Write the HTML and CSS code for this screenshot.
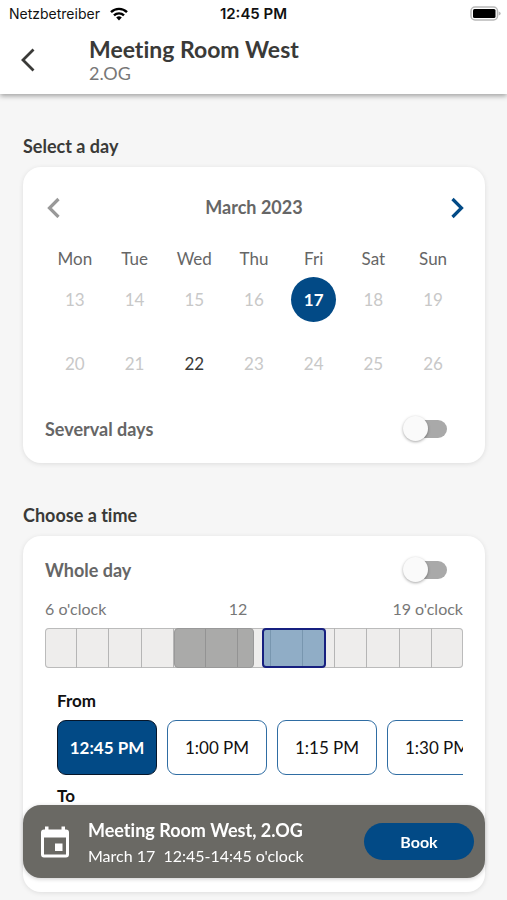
FILE: index.html
```html
<!DOCTYPE html>
<html lang="en">
<head>
<meta charset="utf-8">
<meta name="viewport" content="width=device-width, initial-scale=1">
<title>Meeting Room West</title>
<link rel="stylesheet" href="styles.css">
</head>
<body>
<header class="top">
  <div class="status">
    <span class="carrier">Netzbetreiber
      <svg width="18" height="14" viewBox="0 0 18 14" aria-hidden="true"><g fill="none" stroke="#000" stroke-width="2.4"><path d="M1 5.2a11.4 11.4 0 0 1 16 0"/><path d="M4 8.4a7.2 7.2 0 0 1 10 0"/></g><path d="M6.2 10.6a4 4 0 0 1 5.600 0L9 13.600z"/></svg>
    </span>
    <span class="clock">12:45 PM</span>
    <svg class="battery" width="32" height="16" viewBox="0 0 32 16" aria-hidden="true"><rect x="2" y="1" width="26.500" height="13" rx="4" fill="#fff" stroke="#b8b8b8" stroke-width="1.500"/><rect x="4" y="3" width="22.500" height="9" rx="1.500"/><path d="M29.700 5.500q2 .5 2 2t-2 2z" fill="#b8b8b8"/></svg>
  </div>
  <div class="titlebar">
    <button class="icon-button" type="button" aria-label="Back"><svg width="16" height="26" viewBox="0 0 16 26"><path d="M13.500 2.500 3 13l10.500 10.500" fill="none" stroke="#3a3a38" stroke-width="2.800"/></svg></button>
    <div>
      <h1>Meeting Room West</h1>
      <p class="floor">2.OG</p>
    </div>
  </div>
</header>

<main>
  <h2>Select a day</h2>
  <section class="card">
    <div class="month">
      <button class="icon-button" type="button" aria-label="Previous"><svg width="18" height="22" viewBox="0 0 18 22"><path d="M13.500 3 4.500 12l9 9" fill="none" stroke="#999" stroke-width="3.200"/></svg></button>
      <h3>March 2023</h3>
      <button class="icon-button" type="button" aria-label="Next"><svg width="18" height="22" viewBox="0 0 18 22" overflow="visible"><path d="m7.500 3 9 9-9 9" fill="none" stroke="#024a86" stroke-width="3.200"/></svg></button>
    </div>
    <table>
      <thead><tr><th>Mon</th><th>Tue</th><th>Wed</th><th>Thu</th><th>Fri</th><th>Sat</th><th>Sun</th></tr></thead>
      <tbody>
        <tr><td>13</td><td>14</td><td>15</td><td>16</td><td><button class="day chosen" type="button">17</button></td><td>18</td><td>19</td></tr>
        <tr><td>20</td><td>21</td><td><button class="day" type="button">22</button></td><td>23</td><td>24</td><td>25</td><td>26</td></tr>
      </tbody>
    </table>
    <div class="option">
      <label for="several">Severval days</label>
      <input class="switch" id="several" type="checkbox" role="switch">
    </div>
  </section>

  <h2>Choose a time</h2>
  <section class="card">
    <div class="option">
      <label for="whole">Whole day</label>
      <input class="switch" id="whole" type="checkbox" role="switch">
    </div>
    <div class="hours"><span>6 o'clock</span><span>12</span><span>19 o'clock</span></div>
    <div class="timeline">
      <i></i><i></i><i></i><i></i><i></i><i></i><i></i><i></i><i></i><i></i><i></i><i></i><i></i>
      <div class="span busy" style="left:30.77%;width:19.23%"></div>
      <div class="span picked" style="left:51.92%;width:15.39%"></div>
    </div>
    <div class="times">
      <h4>From</h4>
      <div class="slots">
        <button class="slot chosen" type="button">12:45 PM</button>
        <button class="slot" type="button">1:00 PM</button>
        <button class="slot" type="button">1:15 PM</button>
        <button class="slot" type="button">1:30 PM</button>
      </div>
      <h4>To</h4>
      <div class="slots"></div>
    </div>
  </section>
</main>

<footer class="booking">
  <svg width="28" height="32" viewBox="0 0 28 32" aria-hidden="true"><path fill="#fff" fill-rule="evenodd" d="M4 .5h3.500v3h13v-3H24v3h1a3 3 0 0 1 3 3v22a3 3 0 0 1-3 3H3a3 3 0 0 1-3-3v-22a3 3 0 0 1 3-3h1zM3 11.500v17h22v-17zM14 17.500h7.500V25H14z"/></svg>
  <div class="summary">
    <strong>Meeting Room West, 2.OG</strong>
    <p>March 17&nbsp; 12:45-14:45 o'clock</p>
  </div>
  <button class="book" type="button">Book</button>
</footer>
</body>
</html>
```
FILE: styles.css
```css
* { box-sizing: border-box; }

body {
  margin: 0;
  background: #f6f6f6;
  color: #3a3a38;
  font-family: Lato, "Liberation Sans", sans-serif;
  font-size: 18px;
  font-variant-ligatures: none;
}

h1, h2, h3, h4, p { margin: 0; }

button {
  padding: 0;
  border: 0;
  background: none;
  color: inherit;
  font: inherit;
  font-variant-ligatures: none;
  cursor: pointer;
}

svg { display: block; }

.top {
  height: 94px;
  background: #fff;
  box-shadow: 0 2px 5px rgba(0, 0, 0, 0.35);
}

.status {
  display: grid;
  grid-template-columns: 1fr auto 1fr;
  align-items: center;
  height: 28px;
  padding: 0 6px;
  color: #111;
  font: 14px/20px Inter, sans-serif;
}

.carrier {
  display: flex;
  align-items: center;
  gap: 10px;
  padding-left: 3px;
}

.clock {
  font-size: 15px;
  font-weight: 600;
}

.battery { justify-self: end; }

.titlebar {
  display: flex;
  align-items: center;
  gap: 53px;
  height: 64px;
  padding-left: 20px;
}

.icon-button { display: block; }

h1 {
  font-size: 23px;
  font-weight: 700;
  line-height: 26px;
}

.floor {
  color: #777;
  line-height: 22px;
}

main { padding: 42px 22px 7px 23px; }

h2 {
  font-size: 18px;
  font-weight: 700;
  line-height: 20px;
}

.card {
  margin: 11px 0 42px;
  padding: 22px;
  border-radius: 18px;
  background: #fff;
  box-shadow: 0 1px 5px rgba(0, 0, 0, 0.1);
}

.card:last-child { margin-bottom: 0; }

.month {
  display: flex;
  align-items: center;
  justify-content: space-between;
  height: 36px;
}

h3 {
  color: #666;
  font-size: 18px;
  font-weight: 700;
}

table {
  width: 100%;
  margin-top: 16px;
  border-collapse: collapse;
  font-size: 17px;
  table-layout: fixed;
  text-align: center;
}

th {
  height: 34px;
  padding: 0;
  color: #666;
  font-weight: 400;
}

td {
  height: 48px;
  padding: 0;
  color: #c8c8c8;
}

tbody tr:last-child td {
  height: 94px;
  padding-bottom: 14px;
}

.day {
  width: 45px;
  height: 45px;
  border-radius: 50%;
  color: #3a3a38;
}

.day.chosen {
  background: #024a86;
  color: #fff;
  font-weight: 700;
}

.option {
  display: flex;
  align-items: center;
  justify-content: space-between;
  height: 24px;
  padding-right: 16px;
  color: #666;
  font-weight: 700;
}

.switch {
  position: relative;
  width: 43px;
  height: 18px;
  margin: 0;
  border-radius: 9px;
  background: #a9a9a9;
  appearance: none;
}

.switch::before {
  content: "";
  position: absolute;
  top: -4px;
  left: -1px;
  width: 25px;
  height: 25px;
  border-radius: 50%;
  background: #fafafa;
  box-shadow: 0 1px 3px rgba(0, 0, 0, 0.35);
}

.hours {
  display: grid;
  grid-template-columns: 5fr 2fr 6fr;
  margin: 17px 0 9px;
  color: #777;
  font-size: 16px;
  line-height: 20px;
}

.hours span:nth-child(2) { text-align: center; }
.hours span:last-child { text-align: right; }

.timeline {
  position: relative;
  display: flex;
  height: 40px;
  border-radius: 4px;
  background: #eeedec;
  box-shadow: inset 0 0 0 1px #bbb;
}

.timeline i { flex: 1; }
.timeline i + i { border-left: 1px solid #b5b5b5; }

.span {
  position: absolute;
  top: 0;
  bottom: 0;
  border-radius: 4px;
}

.busy {
  border: 1px solid #999;
  background: rgba(125, 125, 125, 0.6);
}

.picked {
  border: 2px solid #172080;
  background: rgba(75, 128, 170, 0.58);
}

.times { padding-left: 12px; }

h4 {
  padding-top: 23px;
  color: #111;
  font-size: 17px;
  font-weight: 700;
  line-height: 20px;
}

.slots {
  display: flex;
  gap: 10px;
  height: 55px;
  margin-top: 9px;
  overflow-x: auto;
  scrollbar-width: none;
}

.slots + h4 { padding-top: 11px; }

.slot {
  flex: 0 0 100px;
  border: 1px solid #2f6da3;
  border-radius: 9px;
  color: #111;
  font-size: 17px;
}

.slot.chosen {
  border-color: #06162a;
  background: #024a86;
  color: #fff;
  font-weight: 700;
}

.booking {
  position: fixed;
  right: 22px;
  bottom: 22px;
  left: 23px;
  display: flex;
  align-items: center;
  gap: 19px;
  height: 73px;
  padding: 0 11px 0 18px;
  border-radius: 18px;
  background: #6a6964;
  color: #fff;
  box-shadow: 0 1px 4px rgba(0, 0, 0, 0.2);
}

.summary {
  flex: 1;
  padding-top: 2px;
  font-size: 16px;
  line-height: 25px;
}

.summary strong {
  display: block;
  font-size: 18px;
  font-weight: 700;
}

.book {
  width: 110px;
  height: 37px;
  border-radius: 19px;
  background: #024a86;
  font-size: 16px;
  font-weight: 700;
}
```
